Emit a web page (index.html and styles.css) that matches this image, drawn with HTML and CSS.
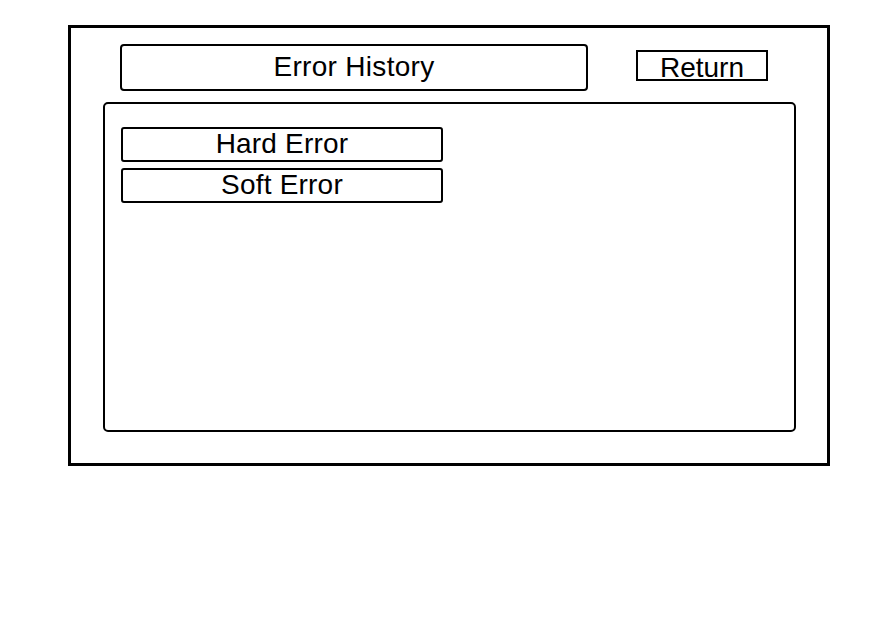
FILE: index.html
```html
<!DOCTYPE html>
<html>
<head>
<meta charset="utf-8">
<link rel="stylesheet" href="styles.css">
</head>
<body>
<div class="frame">
  <div class="header">
    <div class="title">Error History</div>
    <div class="return">Return</div>
  </div>
  <div class="panel">
    <div class="item">Hard Error</div>
    <div class="item">Soft Error</div>
  </div>
</div>
</body>
</html>
```
FILE: styles.css
```css
html, body {
  margin: 0;
  padding: 0;
  background: #fff;
}
body {
  font-family: "Liberation Sans", Arial, sans-serif;
  color: #000;
  padding: 25px 0 0 68px;
}
.frame {
  box-sizing: border-box;
  width: 762px;
  height: 441px;
  border: 3px solid #000;
  padding: 16px 0 0 32px;
}
.header {
  display: flex;
  align-items: flex-start;
  margin-left: 17px;
}
.title {
  box-sizing: border-box;
  width: 468px;
  height: 47px;
  border: 2px solid #000;
  border-radius: 4px;
  font-size: 28px;
  letter-spacing: 0.3px;
  line-height: 41px;
  text-align: center;
}
.return {
  box-sizing: border-box;
  width: 132px;
  height: 31px;
  margin: 6px 0 0 48px;
  border: 2px solid #000;
  font-size: 28px;
  line-height: 30px;
  padding-top: 1px;
  text-align: center;
}
.panel {
  box-sizing: border-box;
  width: 693px;
  height: 330px;
  margin-top: 11px;
  border: 2px solid #000;
  border-radius: 5px;
  padding: 23px 0 0 16px;
  display: flex;
  flex-direction: column;
  gap: 6px;
}
.item {
  box-sizing: border-box;
  width: 322px;
  height: 35px;
  border: 2px solid #000;
  border-radius: 3px;
  font-size: 28px;
  letter-spacing: 0.2px;
  line-height: 29px;
  text-align: center;
}
```
